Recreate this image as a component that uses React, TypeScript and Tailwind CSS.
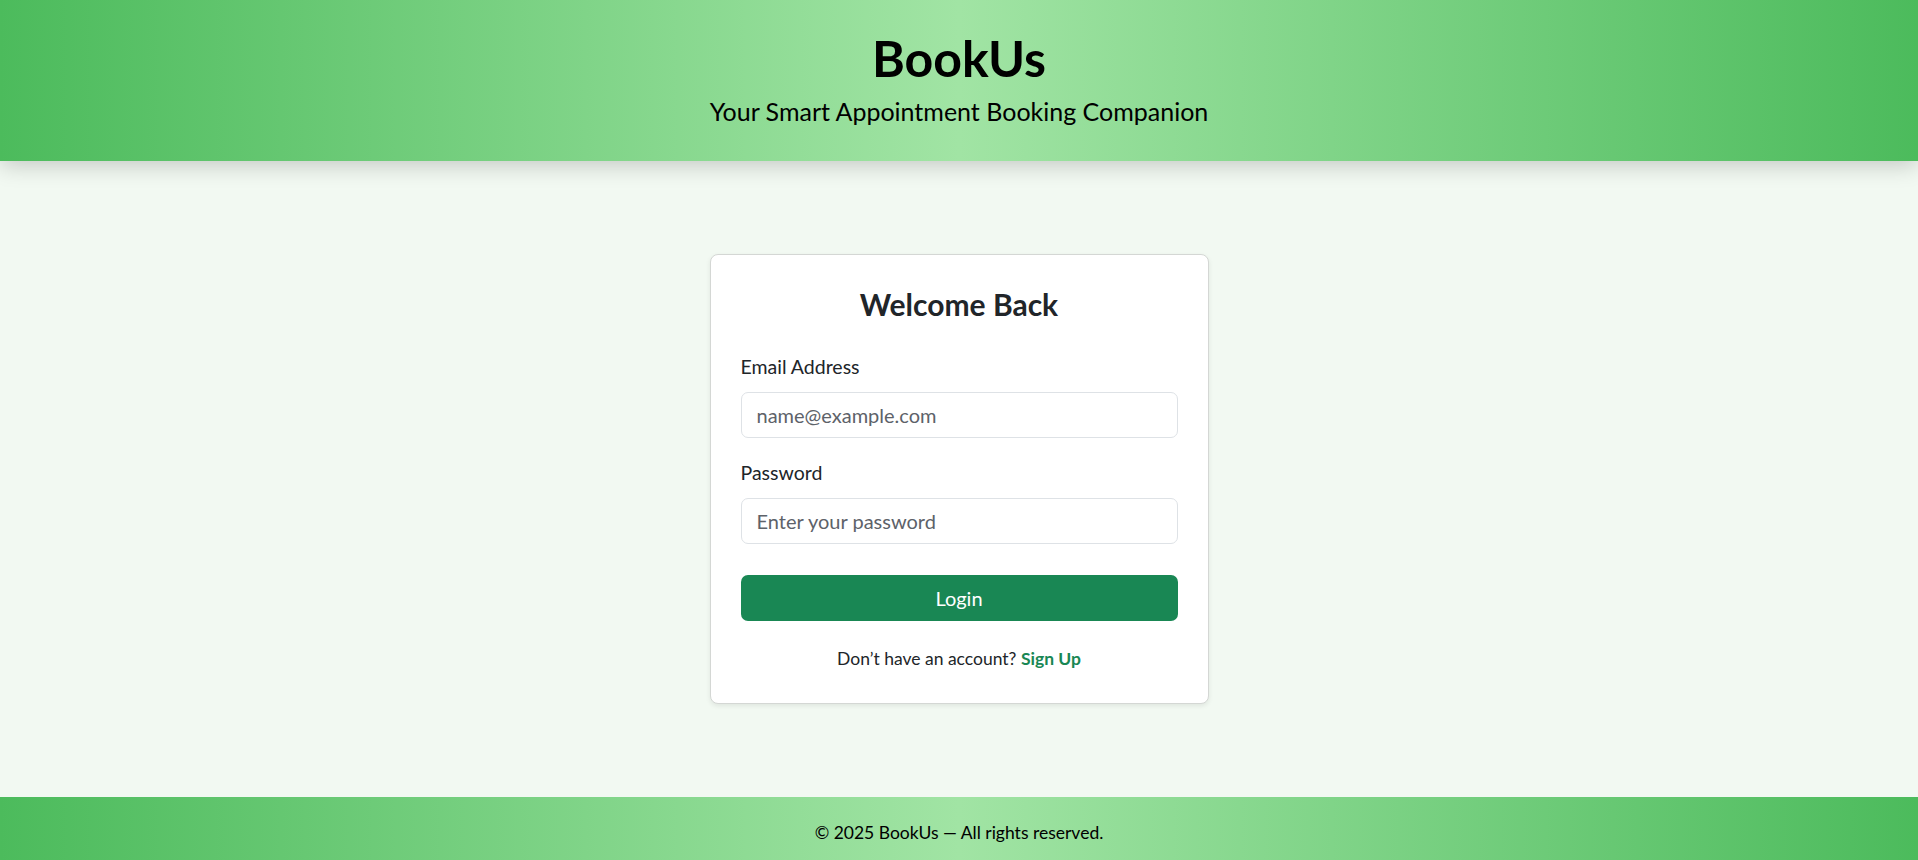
import React from "react";

export default function App() {
  return (
    <div className="flex min-h-screen flex-col bg-[#f2f9f2] font-['Lato',sans-serif] text-[#212529]">
      <header className="relative z-10 h-[161px] bg-[linear-gradient(90deg,#4cbb5c_0%,#a1e4a4_50%,#4cbb5c_100%)] pt-[28px] text-center text-black shadow-[0_4px_22px_rgba(0,0,0,0.2)]">
        <h1 className="text-[50px] font-bold leading-[60px]">BookUs</h1>
        <p className="mt-[8px] text-[25px] leading-[30px]">Your Smart Appointment Booking Companion</p>
      </header>

      <main className="flex flex-1 items-center justify-center">
        <div className="w-[499px] rounded-[8px] border border-[#d4d7d4] bg-white px-[30px] pb-[31px] pt-[31px] shadow-[0_2px_5px_rgba(0,0,0,0.08)]">
          <h2 className="text-center text-[30px] font-bold leading-[36px]">Welcome Back</h2>

          <form className="mt-[30px]" onSubmit={(e) => e.preventDefault()}>
            <label htmlFor="email" className="mb-[10px] block text-[19.5px] leading-[30px]">
              Email Address
            </label>
            <input
              id="email"
              type="email"
              placeholder="name@example.com"
              className="block h-[46px] w-full rounded-[7px] border border-[#dee2e6] bg-white px-[15px] text-[20px] leading-[24px] outline-none placeholder:text-[#5d6269]"
            />

            <label htmlFor="password" className="mb-[10px] mt-[20px] block text-[19.5px] leading-[30px]">
              Password
            </label>
            <input
              id="password"
              type="password"
              placeholder="Enter your password"
              className="block h-[46px] w-full rounded-[7px] border border-[#dee2e6] bg-white px-[15px] text-[20px] leading-[24px] outline-none placeholder:text-[#5d6269]"
            />

            <button
              type="submit"
              className="mt-[31px] flex h-[46px] w-full items-center justify-center rounded-[7px] bg-[#198754] text-[20px] leading-[24px] text-white"
            >
              Login
            </button>
          </form>

          <p className="mt-[25px] text-center text-[17.5px] leading-[26px]">
            Don’t have an account?{" "}
            <a href="#" className="font-bold text-[#198754] no-underline">
              Sign Up
            </a>
          </p>
        </div>
      </main>

      <footer className="h-[63px] bg-[linear-gradient(90deg,#4cbb5c_0%,#a1e4a4_50%,#4cbb5c_100%)] pt-[23px] text-center text-[17.5px] leading-[26px] text-black">
        © 2025 BookUs — All rights reserved.
      </footer>
    </div>
  );
}
